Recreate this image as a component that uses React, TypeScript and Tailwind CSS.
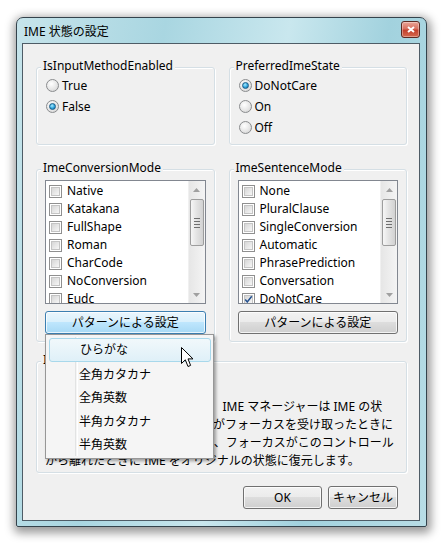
import type { ReactNode } from "react";

const FONT = "font-['Noto_Sans','Noto_Sans_CJK_JP',sans-serif]";

function Radio({ checked, label }: { checked?: boolean; label: string }) {
  return (
    <div className="flex items-center h-[21px] gap-[3px]">
      <span className="w-[13px] h-[13px] rounded-full border border-[#8a8c8e] bg-[radial-gradient(circle_at_40%_35%,#ffffff,#e4e4e4_60%,#c9c9c9)] flex items-center justify-center shrink-0">
        {checked && (
          <span className="w-[7px] h-[7px] rounded-full border border-[#1b5c87] bg-[radial-gradient(circle_at_40%_35%,#a9ecff,#2ea3dc_55%,#0a6299)]" />
        )}
      </span>
      <span className="leading-[14px]">{label}</span>
    </div>
  );
}

function Check({ checked }: { checked?: boolean }) {
  return (
    <span className="w-[13px] h-[13px] border border-[#8f8f8f] bg-white p-[1px] shrink-0 relative">
      <span className="block w-full h-full border border-[#c4c4c4] bg-[linear-gradient(135deg,#d6d6d6,#f6f6f6)]" />
      {checked && (
        <svg viewBox="0 0 11 11" className="absolute left-[1px] top-[1px] w-[9px] h-[9px]">
          <path d="M1.5 5.5 L4 8.5 L9.5 1.5" fill="none" stroke="#23508e" strokeWidth="1.8" />
        </svg>
      )}
    </span>
  );
}

function Group({ title, className, children }: { title: string; className?: string; children: ReactNode }) {
  return (
    <div className={`relative border border-[#d5dfe5] rounded-[3px] shadow-[inset_1px_1px_0_#ffffff,1px_1px_0_#ffffff] ${className ?? ""}`}>
      <span className="absolute -top-[10px] left-[4px] px-[2px] bg-[#f0f0f0] leading-[16px]">{title}</span>
      {children}
    </div>
  );
}

function ScrollBar() {
  return (
    <div className="w-[17px] h-full flex flex-col bg-[linear-gradient(90deg,#e6e6e6,#f4f4f4)] border-l border-[#f0f0f0]">
      <div className="h-[17px] flex items-center justify-center">
        <svg viewBox="0 0 7 4" className="w-[7px] h-[4px]">
          <path d="M0 4 L3.5 0 L7 4 Z" fill="#a0a0a0" />
        </svg>
      </div>
      <div className="flex-1 px-[1px] pt-[1px]">
        <div className="h-[47px] rounded-[2px] border border-[#9d9d9d] bg-[linear-gradient(90deg,#f6f6f6,#e2e2e2_50%,#d2d2d2)] flex flex-col items-center justify-center gap-[2px]">
          <span className="block w-[6px] h-[1px] bg-[#6f6f6f]" />
          <span className="block w-[6px] h-[1px] bg-[#6f6f6f]" />
          <span className="block w-[6px] h-[1px] bg-[#6f6f6f]" />
          <span className="block w-[6px] h-[1px] bg-[#6f6f6f]" />
        </div>
      </div>
      <div className="h-[17px] flex items-center justify-center">
        <svg viewBox="0 0 7 4" className="w-[7px] h-[4px]">
          <path d="M0 0 L3.5 4 L7 0 Z" fill="#a0a0a0" />
        </svg>
      </div>
    </div>
  );
}

function CheckList({ items, checked }: { items: string[]; checked?: string }) {
  return (
    <div className="h-[124px] border border-[#828790] bg-white flex overflow-hidden">
      <div className="flex-1 overflow-hidden pl-[3px] pt-[1px]">
        {items.map((it) => (
          <div key={it} className="h-[18px] flex items-center gap-[5px] whitespace-nowrap">
            <Check checked={it === checked} />
            <span className="leading-[14px]">{it}</span>
          </div>
        ))}
      </div>
      <ScrollBar />
    </div>
  );
}

function Button({ children, hot, className }: { children: ReactNode; hot?: boolean; className?: string }) {
  const skin = hot
    ? "border-[#3c7fb1] bg-[linear-gradient(180deg,#eaf6fd_0%,#d9f0fc_48%,#bee6fd_50%,#a7d9f5_100%)]"
    : "border-[#707070] bg-[linear-gradient(180deg,#f2f2f2_0%,#ebebeb_48%,#dddddd_50%,#cfcfcf_100%)]";
  return (
    <div className={`h-[23px] border rounded-[3px] flex items-center justify-center shadow-[inset_0_0_0_1px_rgba(255,255,255,0.75)] ${skin} ${className ?? ""}`}>
      {children}
    </div>
  );
}

function Cursor() {
  return (
    <svg viewBox="0 0 13 21" className="absolute left-[135px] top-[12px] w-[13px] h-[21px]">
      <path d="M0.5 0.5 L0.5 16.5 L4.3 12.8 L7 19.5 L9.6 18.4 L7 11.9 L12 11.9 Z" fill="#ffffff" stroke="#000000" strokeWidth="1" strokeLinejoin="round" />
    </svg>
  );
}

function Menu() {
  const items = ["ひらがな", "全角カタカナ", "全角英数", "半角カタカナ", "半角英数"];
  return (
    <div className="absolute left-0 top-[23px] w-[169px] h-[125px] z-10 border border-[#979797] bg-[#f5f5f5] shadow-[2px_2px_3px_rgba(0,0,0,0.35)] pt-[3px] pl-[3px] pr-[2px]">
      <div className="absolute left-[29px] top-[2px] bottom-[2px] w-[2px] border-l border-[#e2e3e3] shadow-[1px_0_0_#ffffff]" />
      {items.map((it, i) => (
        <div
          key={it}
          className={`relative h-[23.5px] flex items-center pl-[30px] rounded-[3px] ${
            i === 0
              ? "border border-[#a8d8eb] bg-[linear-gradient(180deg,#f1f8fb,#dff0f8)] pl-[29px] h-[22px] mb-[1.5px]"
              : ""
          }`}
        >
          {it}
        </div>
      ))}
      <Cursor />
    </div>
  );
}

export default function App() {
  const conv = ["Native", "Katakana", "FullShape", "Roman", "CharCode", "NoConversion", "Eudc"];
  const sent = ["None", "PluralClause", "SingleConversion", "Automatic", "PhrasePrediction", "Conversation", "DoNotCare"];

  return (
    <div className={`w-[442px] h-[552px] bg-white pl-[16px] pt-[17px] text-[12px] text-black ${FONT}`}>
      <div className="w-[411px] h-[510px] border border-[#34434c] rounded-t-[7px] rounded-b-[2px] flex flex-col bg-[linear-gradient(100deg,#c6e4eb_0%,#a9d6e1_30%,#c9e7ee_55%,#a2d2de_75%,#b8dde6_100%)] shadow-[1px_3px_10px_3px_rgba(0,0,0,0.4)]">
        <div className="h-[26px] flex items-center justify-between pl-[7px] pr-[6px]">
          <span className="leading-[14px] pt-[3px]">IME 状態の設定</span>
          <div className="w-[19px] h-[17px] -mt-[2px] rounded-[3px] border border-[#5d2a22] bg-[linear-gradient(180deg,#e9a597_0%,#d9705f_45%,#c3412d_55%,#d56a4f_100%)] flex items-center justify-center shadow-[inset_0_0_0_1px_rgba(255,255,255,0.35)]">
            <svg viewBox="0 0 8 7" className="w-[8px] h-[7px]">
              <path d="M1 1 L7 6 M7 1 L1 6" stroke="#ffffff" strokeWidth="2" />
            </svg>
          </div>
        </div>
        <div className="flex-1 pl-[5px] pr-[6px] pb-[5px]">
          <div className="h-full border border-[#4e5c66] bg-[#f0f0f0] pl-[13px] pr-[12px] pt-[23px] pb-[11px] flex flex-col">
            <div className="grid grid-cols-2 gap-x-[14px]">
              <Group title="IsInputMethodEnabled" className="h-[78px] pl-[9px] pt-[7px]">
                <Radio label="True" />
                <Radio label="False" checked />
              </Group>
              <Group title="PreferredImeState" className="h-[78px] pl-[9px] pt-[7px]">
                <Radio label="DoNotCare" checked />
                <Radio label="On" />
                <Radio label="Off" />
              </Group>
            </div>
            <div className="grid grid-cols-2 gap-x-[14px] mt-[24px]">
              <Group title="ImeConversionMode" className="h-[173px] px-[8px] pt-[10px]">
                <CheckList items={conv} />
                <div className="relative mt-[7px]">
                  <Button hot>パターンによる設定</Button>
                  <Menu />
                </div>
              </Group>
              <Group title="ImeSentenceMode" className="h-[173px] px-[8px] pt-[10px]">
                <CheckList items={sent} checked="DoNotCare" />
                <Button className="mt-[7px]">パターンによる設定</Button>
              </Group>
            </div>
            <Group title="IME の動作" className="h-[112px] mt-[19px] pl-[8px] pt-[36px]">
              <div className="leading-[18px] whitespace-nowrap">
                <div>
                  このオプションを設定すると、
                  <span className="inline-block w-[10px]" />
                  IME マネージャーは IME の状
                </div>
                <div>態を保存し、このコントロールがフォーカスを受け取ったときに</div>
                <div>IME を指定された状態に設定し、フォーカスがこのコントロール</div>
                <div>から離れたときに IME をオリジナルの状態に復元します。</div>
              </div>
            </Group>
            <div className="flex justify-end gap-[6px] mt-[13px] mr-[9px]">
              <Button className="w-[79px] h-[22px]">OK</Button>
              <Button className="w-[70px] h-[22px]">キャンセル</Button>
            </div>
          </div>
        </div>
      </div>
    </div>
  );
}
